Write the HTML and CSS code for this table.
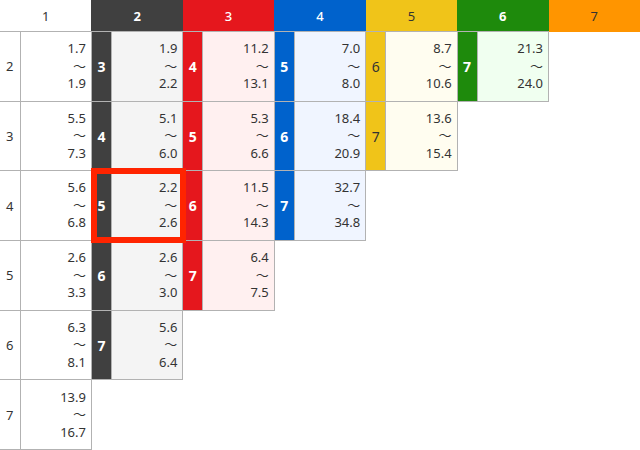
FILE: index.html
```html
<!DOCTYPE html>
<html lang="ja">
<head>
    <meta charset="UTF-8">
    <meta name="viewport" content="width=device-width, initial-scale=1.0">
    <title>ワイドオッズ</title>
    <link rel="stylesheet" href="styles.css">
</head>
<body>

    <table class="odds">
        <colgroup>
            <col class="w-num"><col class="w-val">
            <col class="w-num"><col class="w-val">
            <col class="w-num"><col class="w-val">
            <col class="w-num"><col class="w-val">
            <col class="w-num"><col class="w-val">
            <col class="w-num"><col class="w-val">
            <col class="w-num"><col class="w-val">
        </colgroup>
        <tr class="head">
            <th colspan="2" class="h1 dark">1</th>
            <th colspan="2" class="h2 bold">2</th>
            <th colspan="2" class="h3">3</th>
            <th colspan="2" class="h4">4</th>
            <th colspan="2" class="h5 dark">5</th>
            <th colspan="2" class="h6 bold">6</th>
            <th colspan="2" class="h7 dark">7</th>
        </tr>
        <tr>
            <td class="lbl">2</td><td class="val">1.7<br>〜<br>1.9</td>
            <td class="num c2">3</td><td class="val v2">1.9<br>〜<br>2.2</td>
            <td class="num c3">4</td><td class="val v3">11.2<br>〜<br>13.1</td>
            <td class="num c4">5</td><td class="val v4">7.0<br>〜<br>8.0</td>
            <td class="num c5">6</td><td class="val v5">8.7<br>〜<br>10.6</td>
            <td class="num c6">7</td><td class="val v6">21.3<br>〜<br>24.0</td>
            <td colspan="2" class="blank"></td>
        </tr>
        <tr>
            <td class="lbl">3</td><td class="val">5.5<br>〜<br>7.3</td>
            <td class="num c2">4</td><td class="val v2">5.1<br>〜<br>6.0</td>
            <td class="num c3">5</td><td class="val v3">5.3<br>〜<br>6.6</td>
            <td class="num c4">6</td><td class="val v4">18.4<br>〜<br>20.9</td>
            <td class="num c5">7</td><td class="val v5">13.6<br>〜<br>15.4</td>
            <td colspan="4" class="blank"></td>
        </tr>
        <tr>
            <td class="lbl">4</td><td class="val">5.6<br>〜<br>6.8</td>
            <td class="num c2 picked">5<div class="pick"></div></td><td class="val v2">2.2<br>〜<br>2.6</td>
            <td class="num c3">6</td><td class="val v3">11.5<br>〜<br>14.3</td>
            <td class="num c4">7</td><td class="val v4">32.7<br>〜<br>34.8</td>
            <td colspan="6" class="blank"></td>
        </tr>
        <tr>
            <td class="lbl">5</td><td class="val">2.6<br>〜<br>3.3</td>
            <td class="num c2">6</td><td class="val v2">2.6<br>〜<br>3.0</td>
            <td class="num c3">7</td><td class="val v3">6.4<br>〜<br>7.5</td>
            <td colspan="8" class="blank"></td>
        </tr>
        <tr>
            <td class="lbl">6</td><td class="val">6.3<br>〜<br>8.1</td>
            <td class="num c2">7</td><td class="val v2">5.6<br>〜<br>6.4</td>
            <td colspan="10" class="blank"></td>
        </tr>
        <tr>
            <td class="lbl">7</td><td class="val">13.9<br>〜<br>16.7</td>
            <td colspan="12" class="blank"></td>
        </tr>
    </table>

</body>
</html>
```

FILE: styles.css
```css
body {
    margin: 0;
    background-color: #fff;
    font-family: "Noto Sans", "Noto Sans CJK JP", sans-serif;
    color: #333;
}
.odds {
    width: 640px;
    table-layout: fixed;
    border-collapse: collapse;
}
.w-num {
    width: 20px;
}
.w-val {
    width: 71.43px;
}
.head th {
    height: 31px;
    padding: 0;
    font-size: 13px;
    font-weight: 500;
    text-align: center;
    color: #fff;
}
.head th.dark {
    color: #333;
    font-weight: normal;
}
.head th.bold {
    font-weight: bold;
}
.odds tr:not(.head) {
    height: 69.7px;
}
.odds td {
    padding: 0;
    border: 1px solid #b2b2b2;
}
.odds td.blank {
    border: none;
}
.odds td.lbl {
    border-left: none;
    text-align: center;
    font-size: 13px;
}
.odds td.val {
    padding-right: 5px;
    text-align: right;
    font-size: 13px;
    line-height: 17.5px;
    vertical-align: middle;
}
.num {
    text-align: center;
    font-size: 14px;
    font-weight: bold;
    color: #fff;
}
.picked {
    position: relative;
}
.pick {
    position: absolute;
    left: -1px;
    top: -3px;
    width: 83px;
    height: 63px;
    border: 6px solid #ff2400;
}

/* header colours */
.h1 { background-color: #fff; }
.h2 { background-color: #404040; }
.h3 { background-color: #e5171d; }
.h4 { background-color: #0062cc; }
.h5 { background-color: #f0c419; }
.h6 { background-color: #1e8a0c; }
.h7 { background-color: #ff9500; }

/* number cells */
.c2 { background-color: #404040; }
.c3 { background-color: #e5171d; }
.c4 { background-color: #0062cc; }
.c5 { background-color: #f0c419; color: #333; font-weight: normal; }
.c6 { background-color: #1e8a0c; }

/* value cells */
.v2 { background-color: #f4f4f4; }
.v3 { background-color: #fff0f0; }
.v4 { background-color: #f0f5ff; }
.v5 { background-color: #fffdf0; }
.v6 { background-color: #f0fff0; }
```
